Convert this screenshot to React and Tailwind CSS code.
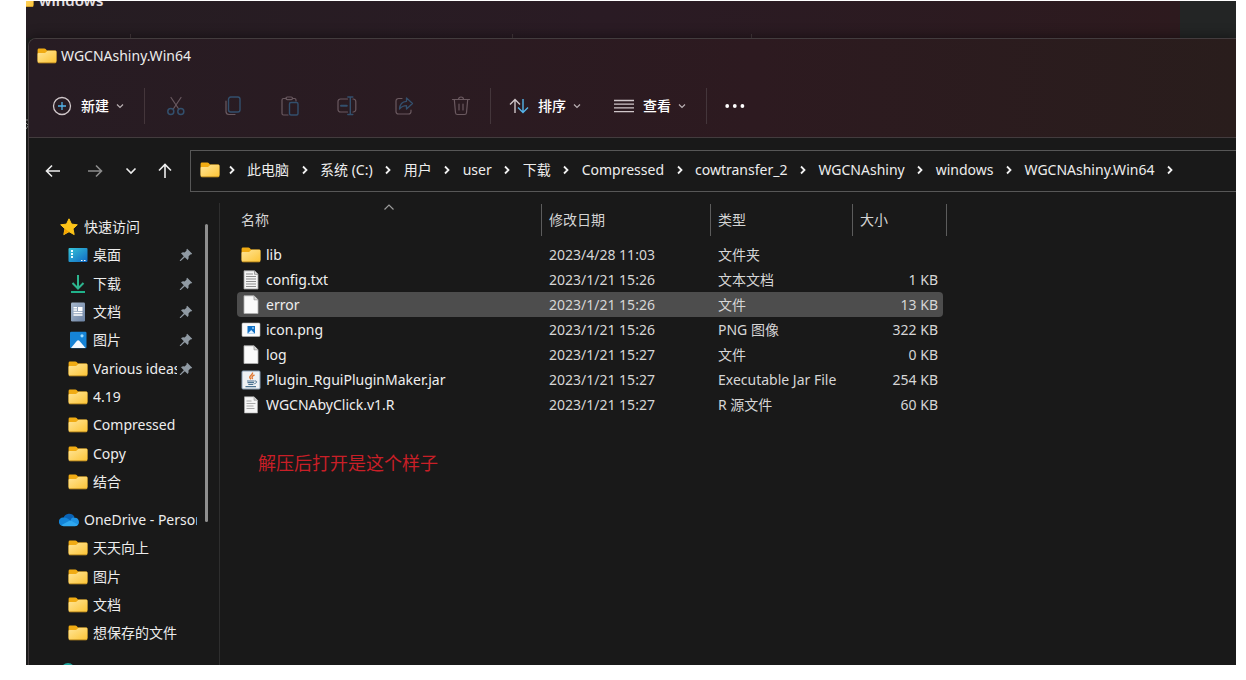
import React from "react";

const gray = "#cfc6c9";
const blue = "#55b4ea";

function Folder() {
  return (
    <svg width="20" height="16" viewBox="0 0 20 17" className="shrink-0">
      <defs>
        <linearGradient id="folderFront" x1="0" y1="0" x2="1" y2="1">
          <stop offset="0" stopColor="#ffe597" />
          <stop offset="1" stopColor="#fcc436" />
        </linearGradient>
      </defs>
      <path d="M0 2A1.500 1.500 0 0 1 1.500.5h5.700c.6 0 1 .2 1.400.6L10 2.600h8.500A1.500 1.500 0 0 1 20 4v10H0z" fill="#f0ab13" />
      <path d="M0 6.200c0-.6.4-1 1-1h6.500c.6 0 1-.2 1.400-.6L10 3.400c.3-.3.6-.4 1-.4h8c.6 0 1 .4 1 1v10.500a1.300 1.300 0 0 1-1.300 1.300H1.300A1.300 1.300 0 0 1 0 14.500z" fill="url(#folderFront)" />
      <path d="M.6 15.300q.4.500 1 .5h16.800q.6 0 1-.5" stroke="#e5a81f" strokeWidth=".8" fill="none" />
    </svg>
  );
}

function Caret({ className = "text-[#b9b0b3]" }) {
  return (
    <svg width="8" height="8" viewBox="0 0 8 8" className={className}>
      <path d="M1 2.500 4 5.500 7 2.500" fill="none" stroke="currentColor" strokeWidth="1.200" />
    </svg>
  );
}

function Tool({ label, children }) {
  return (
    <button aria-label={label} className="flex h-9 w-[57px] items-center justify-center opacity-45">
      <svg width="20" height="20" viewBox="0 0 20 20" fill="none" strokeWidth="1.200" strokeLinecap="round" strokeLinejoin="round">
        {children}
      </svg>
    </button>
  );
}

const dim = "#b8a4ab";
const dimBlue = "#3f8fc8";

function Tools() {
  return (
    <div className="flex">
      <Tool label="剪切">
        <path d="M5 1.500 12.700 13M15 1.500 7.300 13" stroke={dim} />
        <circle cx="4.800" cy="15.500" r="3" stroke={dimBlue} strokeWidth="1.500" />
        <circle cx="14.800" cy="15.500" r="3" stroke={dimBlue} strokeWidth="1.500" />
      </Tool>
      <Tool label="复制">
        <path d="M3 5v10.500a3 3 0 0 0 3 3h6" stroke={dim} />
        <rect x="5.500" y="1" width="11.500" height="15" rx="2.200" stroke={dimBlue} strokeWidth="1.400" />
      </Tool>
      <Tool label="粘贴">
        <path d="M6 2.500H3.500A1.500 1.500 0 0 0 2 4v13.500A1.500 1.500 0 0 0 3.500 19H8M12.500 2.500h2A1.500 1.500 0 0 1 16 4v1" stroke={dim} />
        <rect x="6" y="1" width="6.500" height="2.600" rx="1.300" stroke={dim} />
        <rect x="9.500" y="6.500" width="8.500" height="12.500" rx="1.500" stroke={dimBlue} strokeWidth="1.400" />
      </Tool>
      <Tool label="重命名">
        <path d="M10.500 3H3.500A2.500 2.500 0 0 0 1 5.500v8A2.500 2.500 0 0 0 3.500 16h7M16 3a2.500 2.500 0 0 1 2.800 2.500v8A2.500 2.500 0 0 1 16 16" stroke={dim} />
        <path d="M13.300 1v17.500M10.800 1h5M10.800 18.500h5" stroke={dimBlue} strokeWidth="1.400" />
        <path d="M4 9.700h5.800" stroke={dimBlue} strokeWidth="2" />
      </Tool>
      <Tool label="共享">
        <path d="M8 2.500H4.500A2.500 2.500 0 0 0 2 5v10.500A2.500 2.500 0 0 0 4.500 18h10a2.500 2.500 0 0 0 2.500-2.500V14" stroke={dim} />
        <path d="M12.500 2 18.500 7.500 12.500 13v-3.300c-3 0-5 .9-7 3.300.3-4.500 2.600-7.400 7-7.700z" stroke={dimBlue} strokeWidth="1.300" />
      </Tool>
      <Tool label="删除">
        <path d="M1.500 3.500h17M7.500 3.500a2.500 2.500 0 0 1 5 0M3.300 3.500l1.200 13.200a2 2 0 0 0 2 1.800h7a2 2 0 0 0 2-1.800l1.200-13.200M8 8v6M12 8v6" stroke={dim} />
      </Tool>
    </div>
  );
}

function Divider() {
  return <div className="h-9 w-px shrink-0 bg-[#44363b]" />;
}

function Toolbar() {
  return (
    <div className="flex h-[63px] items-center border-b border-[#433c3e] pl-[23px] text-sm font-medium text-white">
      <button className="flex items-center gap-[9px]">
        <svg width="20" height="20" viewBox="0 0 20 20" fill="none">
          <circle cx="10" cy="10" r="8.500" stroke={gray} strokeWidth="1.300" />
          <path d="M10 6v8M6 10h8" stroke={blue} strokeWidth="1.300" />
        </svg>
        新建
        <span className="-ml-[2px]"><Caret /></span>
      </button>
      <div className="w-5" />
      <Divider />
      <div className="w-[2px]" />
      <Tools />
      <div className="w-px" />
      <Divider />
      <div className="w-[18px]" />
      <button className="flex items-center gap-[9px]">
        <svg width="20" height="16" viewBox="0 0 20 16" fill="none" strokeWidth="1.400">
          <path d="M6 15V1.500M1 6.500l5-5 5 5" stroke={gray} />
          <path d="M14 1v13.500M9 9.500l5 5 5-5" stroke={blue} />
        </svg>
        排序
        <span className="-ml-[2px]"><Caret /></span>
      </button>
      <div className="w-[33px]" />
      <button className="flex items-center gap-[9px]">
        <svg width="20" height="14" viewBox="0 0 20 14" stroke={gray} strokeWidth="1.300">
          <path d="M0 1.500h20M0 5.200h20M0 8.900h20M0 12.600h20" />
        </svg>
        查看
        <span className="-ml-[2px]"><Caret /></span>
      </button>
      <div className="w-5" />
      <Divider />
      <button aria-label="更多" className="ml-[18px]">
        <svg width="20" height="6" viewBox="0 0 20 6" fill="#fff">
          <circle cx="2.200" cy="3" r="1.900" /><circle cx="9.800" cy="3" r="1.900" /><circle cx="17.400" cy="3" r="1.900" />
        </svg>
      </button>
    </div>
  );
}

const crumbs = ["此电脑", "系统 (C:)", "用户", "user", "下载", "Compressed", "cowtransfer_2", "WGCNAshiny", "windows", "WGCNAshiny.Win64"];

function CrumbArrow() {
  return (
    <span className="flex w-[31px] shrink-0 justify-center">
      <svg width="8" height="10" viewBox="0 0 8 10">
        <path d="M2 1.500 5.500 5 2 8.500" fill="none" stroke="#f0f0f0" strokeWidth="1.800" />
      </svg>
    </span>
  );
}

function NavButton({ label, className = "text-[#ededed]", children }) {
  return (
    <button aria-label={label} className={`flex h-6 w-4 items-center justify-center ${className}`}>
      <svg width="16" height="16" viewBox="0 0 16 16" fill="none" stroke="currentColor" strokeWidth="1.600" className="shrink-0">
        {children}
      </svg>
    </button>
  );
}

function NavBar() {
  return (
    <div className="flex h-[65px] items-center bg-[#191919] pl-4">
      <div className="flex items-center">
        <NavButton label="后退"><path d="M15 8H1.500M7 2.500 1.500 8 7 13.500" /></NavButton>
        <div className="w-[26px]" />
        <NavButton label="前进" className="text-[#8c8c8c]"><path d="M1 8h13.500M9 2.500 14.500 8 9 13.500" /></NavButton>
        <div className="w-5" />
        <NavButton label="最近位置"><path d="M3.500 5.500 8 10l4.500-4.500" /></NavButton>
        <div className="w-[18px]" />
        <NavButton label="向上"><path d="M8 15V1.500M2 7.500l6-6 6 6" /></NavButton>
      </div>
      <div className="ml-[17px] flex h-[42px] min-w-0 flex-1 items-center overflow-hidden whitespace-nowrap border-y border-l border-[#575757] pb-[2px] pl-[9px] text-[#ededed]">
        <div className="-mr-1"><Folder /></div>
        <CrumbArrow />
        {crumbs.map((c) => (
          <React.Fragment key={c}>
            <a href="#" className="shrink-0">{c}</a>
            <CrumbArrow />
          </React.Fragment>
        ))}
      </div>
    </div>
  );
}

const sideIcons = {
  folder: <Folder />,
  star: (
    <svg width="18" height="18" viewBox="0 0 18 18">
      <path d="m9 .8 2.500 5.300 5.800.7-4.300 4 1.200 5.800L9 13.700l-5.200 2.900L5 10.800l-4.300-4 5.800-.7z" fill="#fcc419" stroke="#fcc419" strokeLinejoin="round" />
      <path d="m9 13.700-5.200 2.900L5 10.800z" fill="#f7a400" />
    </svg>
  ),
  desktop: (
    <svg width="20" height="16" viewBox="0 0 20 16">
      <defs><linearGradient id="desk" x1="0" y1="0" x2="1" y2="1"><stop offset="0" stopColor="#35c5d8" /><stop offset="1" stopColor="#1168c4" /></linearGradient></defs>
      <rect x=".5" y="1" width="19" height="14" rx="1" fill="url(#desk)" />
      <path d="M3 3h2v2H3zM3 6h2v2H3zM3 9h2v2H3z" fill="#e9fbff" />
      <path d="M13 13.500h1.500M16 13.500h1.500" stroke="#fff" strokeWidth="1" />
    </svg>
  ),
  download: (
    <svg width="20" height="20" viewBox="0 0 20 20" fill="none" strokeWidth="2">
      <path d="M10 1v13M4.500 9l5.500 5.500L15.500 9" stroke="#2db58f" />
      <path d="M3 18h14" stroke="#20b28a" />
    </svg>
  ),
  doc: (
    <svg width="20" height="20" viewBox="0 0 20 20">
      <defs><linearGradient id="doc" x1="0" y1="0" x2="1" y2="1"><stop offset="0" stopColor="#a8b8cc" /><stop offset="1" stopColor="#6b82a3" /></linearGradient></defs>
      <rect x="3" y=".5" width="14" height="19" rx="1.200" fill="url(#doc)" />
      <path d="M5.500 5.700H9M5.500 8H9M5.500 10.500h9M5.500 13h9" stroke="#fff" strokeWidth="1.400" />
      <rect x="10" y="5" width="4.500" height="4" fill="#fff" />
    </svg>
  ),
  picture: (
    <svg width="20" height="18" viewBox="0 0 20 18">
      <rect x="2" y=".8" width="16.500" height="16.500" rx="1.200" fill="#1583d6" />
      <path d="M3 17 9 9.800q1.200-1 2.300 0L17.500 17z" fill="#f2f9ff" />
      <circle cx="14" cy="4.800" r="1.600" fill="#9edcff" />
    </svg>
  ),
  cloud: (
    <svg width="20" height="14" viewBox="0 0 20 14">
      <path d="M4.500 5a6 6 0 0 1 11-1l-5 7-7-3z" fill="#0a63b5" />
      <path d="M4 4.600q2.500-.5 4.500 1l5 3.400L4 13A4.200 4.200 0 0 1 4 4.600" fill="#1384d8" />
      <path d="M12 6q1.500-2 4-1.200A4.200 4.200 0 0 1 17 13H11z" fill="#1e93e4" />
      <path d="m2.500 12 8-4.200q1-.4 2 .1l6.500 3.700Q18 13.300 16 13.300H4.500q-1.200-.2-2-1.300" fill="#2fa8f0" />
    </svg>
  ),
  teal: (
    <svg width="20" height="20" viewBox="0 0 20 20"><circle cx="10" cy="10" r="7" fill="#1fa39b" /></svg>
  ),
};

function Pin() {
  return (
    <svg width="14" height="14" viewBox="0 0 14 14" className="shrink-0" fill="#909aa3">
      <path d="M8.200.8 13.200 5.800Q12.500 6.800 11.300 6.500L9.500 8.500Q10 10.500 8.700 12L5.800 9.200 1.700 13 .8 13.100.9 12.300 4.800 8.200 2 5.300Q3.500 4 5.500 4.500L7.500 2.700Q7.200 1.500 8.200.8" />
    </svg>
  );
}

const quick = [
  ["desktop", "桌面", true],
  ["download", "下载", true],
  ["doc", "文档", true],
  ["picture", "图片", true],
  ["folder", "Various ideas", true],
  ["folder", "4.19"],
  ["folder", "Compressed"],
  ["folder", "Copy"],
  ["folder", "结合"],
];
const drive = ["天天向上", "图片", "文档", "想保存的文件"];

function SideRow({ icon, label, pin, root }) {
  return (
    <a href="#" className={`flex min-h-0 min-w-0 items-center ${root ? "pl-[30px]" : "pl-[39px]"}`}>
      <span className="flex w-5 shrink-0 items-center justify-center">{sideIcons[icon]}</span>
      <span className="ml-[5px] min-w-0 flex-1 overflow-hidden whitespace-nowrap">{label}</span>
      {pin && <span className="ml-[2px] mr-1"><Pin /></span>}
    </a>
  );
}

function Sidebar() {
  return (
    <nav className="flex w-[191px] shrink-0 overflow-hidden border-r border-[#2e2e2e] pt-[10px]">
      <div className="w-[168px] shrink-0 text-[#ededed]">
        <div className="grid h-[283px] grid-cols-1 grid-rows-10">
          <SideRow icon="star" label="快速访问" root />
          {quick.map(([icon, label, pin]) => (
            <SideRow key={label} icon={icon} label={label} pin={pin} />
          ))}
        </div>
        <div className="mt-[10px] grid h-[170px] grid-cols-1 grid-rows-6">
          <SideRow icon="cloud" label="OneDrive - Personal" root />
          {drive.map((label) => (
            <SideRow key={label} icon="folder" label={label} />
          ))}
          <div className="pl-[29px] pt-3">{sideIcons.teal}</div>
        </div>
      </div>
      <div className="ml-2 mt-[11px] h-[298px] w-[3px] rounded-full bg-[#8f8f8f]" />
    </nav>
  );
}

const fileIcons = {
  folder: <Folder />,
  text: (
    <svg width="20" height="20" viewBox="0 0 20 20">
      <path d="M3 .8h10.500L17 4.300V19H3z" fill="#f4f4f4" stroke="#9c9c9c" strokeWidth=".8" />
      <path d="M13.500.8v3.500H17" fill="#ddd" stroke="#8c8c8c" strokeWidth=".8" />
      <path d="M5 4h7M5 6.500h10M5 9h10M5 11.500h10M5 14h10M5 16.500h10" stroke="#8d8d8d" strokeWidth="1" />
    </svg>
  ),
  blank: (
    <svg width="20" height="20" viewBox="0 0 20 20">
      <path d="M3 .8h10L17 4.800V18.500H3z" fill="#fafafa" stroke="#b0b0b0" strokeWidth=".8" />
      <path d="M13 .8v4h4" fill="#d8d8d8" stroke="#999" strokeWidth=".8" />
    </svg>
  ),
  image: (
    <svg width="20" height="16" viewBox="0 0 20 16">
      <rect x="1" y="1" width="18" height="13.500" rx="1" fill="#fbfbfb" stroke="#b5b5b5" strokeWidth=".6" />
      <rect x="6.500" y="4" width="7.500" height="7.500" fill="#1070c4" />
      <path d="m6.800 11.500 3.400-3.600 3.500 3.600z" fill="#e2f1ff" />
      <circle cx="12" cy="6" r=".9" fill="#9cd2ff" />
    </svg>
  ),
  jar: (
    <svg width="20" height="20" viewBox="0 0 20 20" fill="none">
      <rect x="1" y="1" width="18" height="18" rx="1" fill="#eef1f4" stroke="#8aa0b5" strokeWidth="1" />
      <path d="M11.500 2.500c1 2.200-4 3.300-2.500 5.300q.5.900 1 1.500M13.500 5c-2.500.9-3.200 2.200-1.800 4" stroke="#e0762f" strokeWidth="1.400" />
      <path d="M6 11h7.500M6.500 12.700h6.500M7.300 14.500h5M4.500 16.700h10.500" stroke="#4c7391" strokeWidth="1.200" />
      <path d="M13.800 11c2.500-.5 2.500 2-.5 2.800" stroke="#4c7391" strokeWidth="1" />
    </svg>
  ),
  script: (
    <svg width="20" height="18" viewBox="0 0 20 18">
      <path d="M3.500.8h9.500L16.500 4.300V17H3.500z" fill="#f5f5f5" stroke="#b0b0b0" strokeWidth=".6" />
      <path d="M13 .8v3.500h3.500" fill="#ccc" stroke="#999" strokeWidth=".6" />
      <path d="M5.500 5h5M5.500 7.500h9M5.500 10h7M5.500 12.500h8" stroke="#a9a9a9" strokeWidth="1" />
    </svg>
  ),
};

const files = [
  ["folder", "lib", "2023/4/28 11:03", "文件夹", ""],
  ["text", "config.txt", "2023/1/21 15:26", "文本文档", "1 KB"],
  ["blank", "error", "2023/1/21 15:26", "文件", "13 KB"],
  ["image", "icon.png", "2023/1/21 15:26", "PNG 图像", "322 KB"],
  ["blank", "log", "2023/1/21 15:27", "文件", "0 KB"],
  ["jar", "Plugin_RguiPluginMaker.jar", "2023/1/21 15:27", "Executable Jar File", "254 KB"],
  ["script", "WGCNAbyClick.v1.R", "2023/1/21 15:27", "R 源文件", "60 KB"],
];

function FileTable() {
  return (
    <table className="w-[710px] table-fixed border-separate border-spacing-0 whitespace-nowrap">
      <colgroup>
        <col className="w-[305px]" />
        <col className="w-[169px]" />
        <col className="w-[142px]" />
        <col className="w-[90px]" />
        <col className="w-1" />
      </colgroup>
      <thead>
        <tr className="h-8 text-left text-[#d4d4d4]">
          <th className="relative border-r border-[#5c5c5c] p-0 pl-1 font-normal">
            名称
            <svg width="10" height="6" viewBox="0 0 10 6" className="absolute left-1/2 top-0 -translate-x-1/2">
              <path d="M.5 5.500 5 1l4.500 4.500" fill="none" stroke="#9a9a9a" strokeWidth="1.200" />
            </svg>
          </th>
          <th className="border-r border-[#5c5c5c] p-0 pl-[7px] font-normal">修改日期</th>
          <th className="border-r border-[#5c5c5c] p-0 pl-[7px] font-normal">类型</th>
          <th colSpan="2" className="border-r border-[#5c5c5c] p-0 pl-[7px] font-normal">大小</th>
        </tr>
      </thead>
      <tbody className="text-[#d6d6d6] before:block before:h-[6px] before:content-['']">
        {files.map(([icon, name, date, type, size]) => {
          const hot = name === "error" ? "bg-[#4d4d4d]" : "";
          return (
            <tr key={name} className="h-[25px]">
              <td className={`rounded-l-sm p-0 pl-1 text-[#efefef] ${hot}`}>
                <span className="flex items-center gap-[5px]">
                  <span className="flex w-5 shrink-0 justify-center">{fileIcons[icon]}</span>
                  {name}
                </span>
              </td>
              <td className={`p-0 pl-[7px] ${hot}`}>{date}</td>
              <td className={`p-0 pl-[7px] ${hot}`}>{type}</td>
              <td className={`rounded-r-sm p-0 pr-[5px] text-right ${hot}`}>{size}</td>
            </tr>
          );
        })}
      </tbody>
    </table>
  );
}

export default function App() {
  return (
    <div className="h-screen bg-white pb-[15px] pl-[26px] pr-[10px] pt-px font-['Noto_Sans','Noto_Sans_CJK_SC',sans-serif] text-sm leading-5">
      <div className="flex h-full flex-col overflow-hidden bg-[#202020]">
        <div className="flex h-[37px] shrink-0">
          <div className="flex flex-1 flex-col justify-between bg-linear-to-r from-[#251d22] via-[#2a1b24] to-[#2d1a1e]">
            <div className="flex h-[6px] items-end gap-[5px] overflow-hidden">
              <div className="-ml-3 -mb-px"><Folder /></div>
              <span className="-mb-[3px] text-[15px] font-semibold leading-5 text-[#e6e1e3]">windows</span>
            </div>
            <div className="flex h-1 text-[#44383c]">
              <div className="w-[105px] border-r" />
              <div className="w-[382px] border-r" />
              <div className="w-[239px] border-r" />
            </div>
          </div>
          <div className="w-14 bg-[#232525]" />
        </div>
        <div className="flex min-h-0 flex-1 bg-[#202020]">
          <div className="w-[2px] shrink-0 overflow-hidden pt-20">
            <svg width="2" height="12" viewBox="0 0 2 12" stroke="#9a9a9a">
              <path d="M0 2h2M0 5l2 2M2 8 0 11" fill="none" />
            </svg>
          </div>
          <main className="flex min-w-0 flex-1 flex-col overflow-hidden rounded-tl-lg border-l border-t border-[#433c3e] bg-[#191919] shadow-[0_-2px_12px_rgba(0,0,0,0.4)]">
            <header className="bg-linear-to-r from-[#271c23] via-[#2d1a20] via-60% to-[#291d1c]">
              <div className="flex h-9 items-center gap-1 pb-[2px] pl-2 text-[#ededed]">
                <Folder />
                <h1>WGCNAshiny.Win64</h1>
              </div>
              <Toolbar />
            </header>
            <NavBar />
            <div className="flex min-h-0 flex-1">
              <Sidebar />
              <section className="flex min-w-0 flex-1 flex-col items-start pl-[17px] pt-px">
                <FileTable />
                <p className="ml-[21px] mt-8 text-lg leading-7 text-[#c91f27]">解压后打开是这个样子</p>
              </section>
            </div>
          </main>
        </div>
      </div>
    </div>
  );
}
